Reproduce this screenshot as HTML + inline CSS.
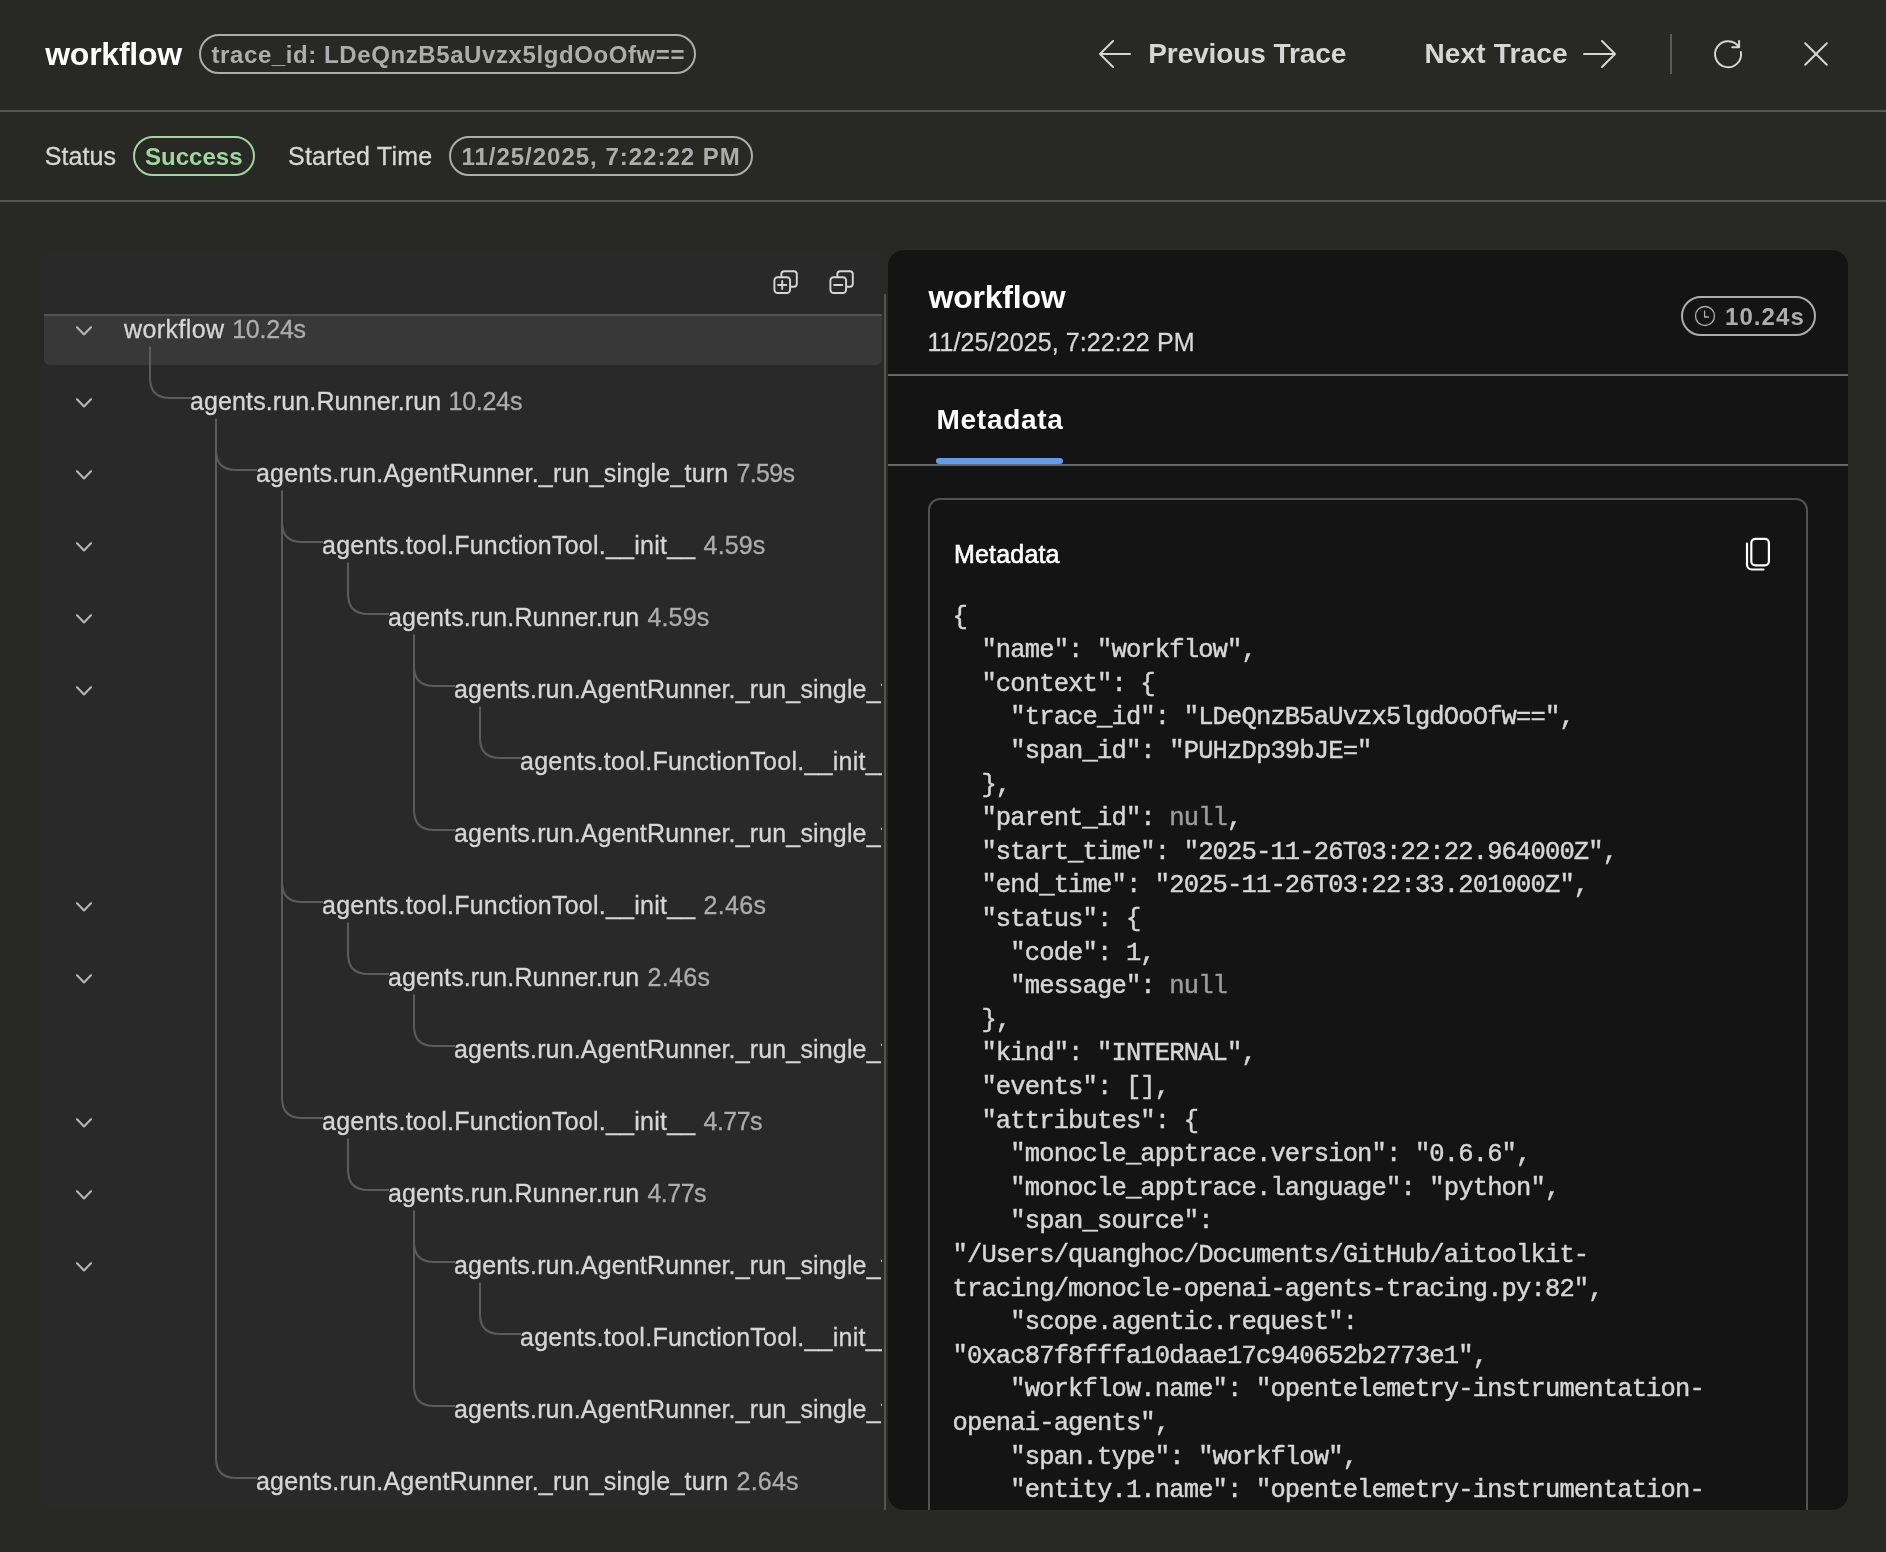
<!DOCTYPE html>
<html lang="en"><head><meta charset="utf-8"><title>workflow - trace details</title>
<style>
*{box-sizing:border-box}
html,body{margin:0;padding:0}
body{width:1886px;height:1552px;overflow:hidden;background:#282924;font-family:"Liberation Sans",sans-serif;position:relative}
#root{position:absolute;left:0;top:0;width:1886px;height:1552px;will-change:transform}
.t{position:absolute;white-space:pre;line-height:1;display:block;margin:0;font-weight:400}
.abs{position:absolute}
#hdr{position:absolute;left:0;top:0;width:1886px;height:112px;border-bottom:2px solid #555555}
#meta{position:absolute;left:0;top:112px;width:1886px;height:90px;border-bottom:2px solid #555555}
.pill{position:absolute;border:2px solid #adadad;border-radius:20px;height:40px}
.vr{position:absolute;left:1670px;top:34px;width:2px;height:40px;background:#5a5a58}
#tree{position:absolute;left:44px;top:250px;width:838px;height:1260px;background:#292929;border-radius:6px;overflow:hidden}
#tree .row{position:absolute;left:0;width:838px;height:72px}
#tree .row.sel{height:71px;background:#383838;border-radius:6px}
#tree .hd{position:absolute;left:0;top:0;width:838px;height:66px;background:#292929;border-bottom:2px solid #525252}
#tree svg.lines{position:absolute;left:0;top:0}
#sep{position:absolute;left:884px;top:294px;width:2px;height:1216px;background:#555555}
#det{position:absolute;left:888px;top:250px;width:960px;height:1260px;background:#141414;border-radius:16px;overflow:hidden}
#det .ln{position:absolute;left:0;width:960px;height:2px;background:#666}
#card{position:absolute;left:40px;top:248px;width:880px;height:1100px;border:2px solid #525252;border-radius:12px}
#tabline{position:absolute;left:48px;top:208px;width:127px;height:6px;border-radius:3px;background:#5f9eee}
pre{position:absolute;margin:0;left:22.5px;top:100.7px;-webkit-text-stroke:0.45px;font-family:"Liberation Mono",monospace;font-size:25.5px;letter-spacing:-0.853px;line-height:33.6px;color:#d6d6d6;white-space:pre}
pre i{font-style:normal;color:#9d9d9d}
</style></head>
<body>
<div id="root">
<header id="hdr">
<h1 class="t" style="left:45.2px;top:38.4px;font-size:32px;font-weight:700;letter-spacing:-0.24px;color:#ffffff">workflow</h1>
<div class="pill" style="left:199px;top:34px;width:497px;border-color:#adadad"><span class="t" style="left:10.5px;top:6.7px;font-size:24px;font-weight:700;letter-spacing:0.59px;color:#adadad">trace_id: LDeQnzB5aUvzx5lgdOoOfw==</span></div>
<div class="nav"><svg class="abs" style="left:1096px;top:36px" width="36" height="36" viewBox="0 0 36 36" fill="none" stroke="#d6d6d6" stroke-width="2" stroke-linecap="round" stroke-linejoin="round"><path d="M34 18H4M17 5L4 18l13 13"/></svg><span class="t" style="left:1148.3px;top:40.2px;font-size:28px;font-weight:700;letter-spacing:-0.10px;color:#d6d6d6">Previous Trace</span></div>
<div class="nav"><span class="t" style="left:1424.5px;top:40.2px;font-size:28px;font-weight:700;letter-spacing:0.15px;color:#d6d6d6">Next Trace</span><svg class="abs" style="left:1582px;top:36px" width="36" height="36" viewBox="0 0 36 36" fill="none" stroke="#d6d6d6" stroke-width="2" stroke-linecap="round" stroke-linejoin="round"><path d="M2 18h31M20 5l13 13-13 13"/></svg></div>
<div class="vr"></div>
<svg class="abs" style="left:1710px;top:36px" width="36" height="36" viewBox="0 0 36 36" fill="none" stroke="#d6d6d6" stroke-width="2" stroke-linecap="round" stroke-linejoin="round"><path d="M30.9 16A13 13 0 1 1 29.1 11.3M29.1 5V11.3H22.2"/></svg>
<svg class="abs" style="left:1798px;top:36px" width="36" height="36" viewBox="0 0 36 36" fill="none" stroke="#d6d6d6" stroke-width="2" stroke-linecap="round" stroke-linejoin="round"><path d="M7.2 7.2l21.6 21.6M28.8 7.2l-21.6 21.6"/></svg>
</header>
<section id="meta">
<span class="t" style="left:44.7px;top:31.6px;font-size:25px;-webkit-text-stroke:0.3px;letter-spacing:0.11px;color:#d6d6d6">Status</span>
<div class="pill" style="left:133px;top:24px;width:122px;border-color:#9fd89f"><span class="t" style="left:10.0px;top:6.5px;font-size:24px;font-weight:700;letter-spacing:0.03px;color:#9fd89f">Success</span></div>
<span class="t" style="left:288.0px;top:31.6px;font-size:25px;-webkit-text-stroke:0.3px;letter-spacing:0.22px;color:#d6d6d6">Started Time</span>
<div class="pill" style="left:449px;top:24px;width:304px;border-color:#adadad"><span class="t" style="left:10.4px;top:6.5px;font-size:24px;font-weight:700;letter-spacing:0.99px;color:#adadad">11/25/2025, 7:22:22 PM</span></div>
</section>
<main>
<nav id="tree">
<div class="row sel" style="top:44px"><span class="t" style="left:80.0px;top:22.6px;font-size:25px;-webkit-text-stroke:0.3px;letter-spacing:0.41px;color:#d6d6d6">workflow</span><span class="t" style="left:188.2px;top:22.6px;font-size:25px;-webkit-text-stroke:0.3px;letter-spacing:-0.23px;color:#adadad">10.24s</span></div>
<div class="row" style="top:116px"><span class="t" style="left:146.0px;top:22.6px;font-size:25px;-webkit-text-stroke:0.3px;letter-spacing:0.12px;color:#d6d6d6">agents.run.Runner.run</span><span class="t" style="left:404.5px;top:22.6px;font-size:25px;-webkit-text-stroke:0.3px;letter-spacing:-0.23px;color:#adadad">10.24s</span></div>
<div class="row" style="top:188px"><span class="t" style="left:212.0px;top:22.6px;font-size:25px;-webkit-text-stroke:0.3px;letter-spacing:0.21px;color:#d6d6d6">agents.run.AgentRunner._run_single_turn</span><span class="t" style="left:692.6px;top:22.6px;font-size:25px;-webkit-text-stroke:0.3px;letter-spacing:-0.69px;color:#adadad">7.59s</span></div>
<div class="row" style="top:260px"><span class="t" style="left:278.0px;top:22.6px;font-size:25px;-webkit-text-stroke:0.3px;letter-spacing:0.24px;color:#d6d6d6">agents.tool.FunctionTool.__init__</span><span class="t" style="left:659.6px;top:22.6px;font-size:25px;-webkit-text-stroke:0.3px;letter-spacing:0.13px;color:#adadad">4.59s</span></div>
<div class="row" style="top:332px"><span class="t" style="left:344.0px;top:22.6px;font-size:25px;-webkit-text-stroke:0.3px;letter-spacing:0.12px;color:#d6d6d6">agents.run.Runner.run</span><span class="t" style="left:603.5px;top:22.6px;font-size:25px;-webkit-text-stroke:0.3px;letter-spacing:0.13px;color:#adadad">4.59s</span></div>
<div class="row" style="top:404px"><span class="t" style="left:410.0px;top:22.6px;font-size:25px;-webkit-text-stroke:0.3px;letter-spacing:0.16px;color:#d6d6d6">agents.run.AgentRunner._run_single_turn</span></div>
<div class="row" style="top:476px"><span class="t" style="left:476.0px;top:22.6px;font-size:25px;-webkit-text-stroke:0.3px;letter-spacing:0.26px;color:#d6d6d6">agents.tool.FunctionTool.__init__</span></div>
<div class="row" style="top:548px"><span class="t" style="left:410.0px;top:22.6px;font-size:25px;-webkit-text-stroke:0.3px;letter-spacing:0.16px;color:#d6d6d6">agents.run.AgentRunner._run_single_turn</span></div>
<div class="row" style="top:620px"><span class="t" style="left:278.0px;top:22.6px;font-size:25px;-webkit-text-stroke:0.3px;letter-spacing:0.24px;color:#d6d6d6">agents.tool.FunctionTool.__init__</span><span class="t" style="left:659.6px;top:22.6px;font-size:25px;-webkit-text-stroke:0.3px;letter-spacing:0.33px;color:#adadad">2.46s</span></div>
<div class="row" style="top:692px"><span class="t" style="left:344.0px;top:22.6px;font-size:25px;-webkit-text-stroke:0.3px;letter-spacing:0.12px;color:#d6d6d6">agents.run.Runner.run</span><span class="t" style="left:603.5px;top:22.6px;font-size:25px;-webkit-text-stroke:0.3px;letter-spacing:0.33px;color:#adadad">2.46s</span></div>
<div class="row" style="top:764px"><span class="t" style="left:410.0px;top:22.6px;font-size:25px;-webkit-text-stroke:0.3px;letter-spacing:0.16px;color:#d6d6d6">agents.run.AgentRunner._run_single_turn</span></div>
<div class="row" style="top:836px"><span class="t" style="left:278.0px;top:22.6px;font-size:25px;-webkit-text-stroke:0.3px;letter-spacing:0.24px;color:#d6d6d6">agents.tool.FunctionTool.__init__</span><span class="t" style="left:659.6px;top:22.6px;font-size:25px;-webkit-text-stroke:0.3px;letter-spacing:-0.54px;color:#adadad">4.77s</span></div>
<div class="row" style="top:908px"><span class="t" style="left:344.0px;top:22.6px;font-size:25px;-webkit-text-stroke:0.3px;letter-spacing:0.12px;color:#d6d6d6">agents.run.Runner.run</span><span class="t" style="left:603.5px;top:22.6px;font-size:25px;-webkit-text-stroke:0.3px;letter-spacing:-0.54px;color:#adadad">4.77s</span></div>
<div class="row" style="top:980px"><span class="t" style="left:410.0px;top:22.6px;font-size:25px;-webkit-text-stroke:0.3px;letter-spacing:0.16px;color:#d6d6d6">agents.run.AgentRunner._run_single_turn</span></div>
<div class="row" style="top:1052px"><span class="t" style="left:476.0px;top:22.6px;font-size:25px;-webkit-text-stroke:0.3px;letter-spacing:0.26px;color:#d6d6d6">agents.tool.FunctionTool.__init__</span></div>
<div class="row" style="top:1124px"><span class="t" style="left:410.0px;top:22.6px;font-size:25px;-webkit-text-stroke:0.3px;letter-spacing:0.16px;color:#d6d6d6">agents.run.AgentRunner._run_single_turn</span></div>
<div class="row" style="top:1196px"><span class="t" style="left:212.0px;top:22.6px;font-size:25px;-webkit-text-stroke:0.3px;letter-spacing:0.21px;color:#d6d6d6">agents.run.AgentRunner._run_single_turn</span><span class="t" style="left:692.6px;top:22.6px;font-size:25px;-webkit-text-stroke:0.3px;letter-spacing:0.21px;color:#adadad">2.64s</span></div>
<svg class="lines" width="838" height="1260" viewBox="0 0 838 1260"><path d="M106.0 96.5V128.0Q106.0 148.0 126.0 148.0H147.0M172.0 200.0Q172.0 220.0 192.0 220.0H213.0M172.0 168.5V1208.0Q172.0 1228.0 192.0 1228.0H213.0M238.0 272.0Q238.0 292.0 258.0 292.0H279.0M238.0 632.0Q238.0 652.0 258.0 652.0H279.0M238.0 240.5V848.0Q238.0 868.0 258.0 868.0H279.0M304.0 312.5V344.0Q304.0 364.0 324.0 364.0H345.0M370.0 416.0Q370.0 436.0 390.0 436.0H411.0M370.0 384.5V560.0Q370.0 580.0 390.0 580.0H411.0M436.0 456.5V488.0Q436.0 508.0 456.0 508.0H477.0M304.0 672.5V704.0Q304.0 724.0 324.0 724.0H345.0M370.0 744.5V776.0Q370.0 796.0 390.0 796.0H411.0M304.0 888.5V920.0Q304.0 940.0 324.0 940.0H345.0M370.0 992.0Q370.0 1012.0 390.0 1012.0H411.0M370.0 960.5V1136.0Q370.0 1156.0 390.0 1156.0H411.0M436.0 1032.5V1064.0Q436.0 1084.0 456.0 1084.0H477.0" fill="none" stroke="#5c5c5c" stroke-width="2"/><path d="M33.0 77.2L40.0 84.4L47.0 77.2M33.0 149.2L40.0 156.4L47.0 149.2M33.0 221.2L40.0 228.4L47.0 221.2M33.0 293.2L40.0 300.4L47.0 293.2M33.0 365.2L40.0 372.4L47.0 365.2M33.0 437.2L40.0 444.4L47.0 437.2M33.0 653.2L40.0 660.4L47.0 653.2M33.0 725.2L40.0 732.4L47.0 725.2M33.0 869.2L40.0 876.4L47.0 869.2M33.0 941.2L40.0 948.4L47.0 941.2M33.0 1013.2L40.0 1020.4L47.0 1013.2" fill="none" stroke="#b6b6b6" stroke-width="2.1" stroke-linecap="round" stroke-linejoin="round"/></svg>
<div class="hd"><svg class="abs" style="left:728px;top:18px" width="28" height="28" viewBox="0 0 28 28" fill="none" stroke="#d6d6d6" stroke-width="1.9" stroke-linecap="round" stroke-linejoin="round"><rect x="2.4" y="9.3" width="15.7" height="15.7" rx="3.2"/><path d="M9.3 8.3V6.2a3 3 0 0 1 3-3h9.5a3 3 0 0 1 3 3v9.5a3 3 0 0 1-3 3h-2.7M10.2 12.9v8.2M6.1 17h8.2"/></svg><svg class="abs" style="left:784px;top:18px" width="28" height="28" viewBox="0 0 28 28" fill="none" stroke="#d6d6d6" stroke-width="1.9" stroke-linecap="round" stroke-linejoin="round"><rect x="2.4" y="9.3" width="15.7" height="15.7" rx="3.2"/><path d="M9.3 8.3V6.2a3 3 0 0 1 3-3h9.5a3 3 0 0 1 3 3v9.5a3 3 0 0 1-3 3h-2.7M6.1 17h8.2"/></svg></div>
</nav>
<div id="sep"></div>
<article id="det">
<h2 class="t" style="left:40.6px;top:30.6px;font-size:32px;font-weight:700;letter-spacing:-0.24px;color:#ffffff">workflow</h2>
<span class="t" style="left:39.4px;top:80.0px;font-size:25px;-webkit-text-stroke:0.3px;letter-spacing:0.10px;color:#d6d6d6">11/25/2025, 7:22:22 PM</span>
<div class="pill" style="left:793px;top:46px;width:135px;border-color:#adadad"><svg class="abs" style="left:10px;top:6px" width="24" height="24" viewBox="0 0 24 24" fill="none" stroke="#adadad" stroke-width="1.3" stroke-linecap="round" stroke-linejoin="round"><circle cx="12" cy="12" r="9.5"/><path d="M11.6 7.2v5.8h4"/></svg><span class="t" style="left:42.0px;top:7.1px;font-size:24px;font-weight:700;letter-spacing:1.08px;color:#adadad">10.24s</span></div>
<div class="ln" style="top:124px"></div>
<span class="t" style="left:48.5px;top:156.0px;font-size:28px;font-weight:700;letter-spacing:0.72px;color:#ffffff">Metadata</span>
<div id="tabline"></div>
<div class="ln" style="top:214px"></div>
<section id="card">
<span class="t" style="left:24.0px;top:41.9px;font-size:25px;-webkit-text-stroke:0.6px;letter-spacing:0.18px;color:#ffffff">Metadata</span>
<svg class="abs" style="left:812px;top:34px" width="32" height="40" viewBox="0 0 32 40" fill="none" stroke="#ffffff" stroke-width="2.2" stroke-linecap="round" stroke-linejoin="round"><rect x="9.3" y="4.8" width="17.6" height="26.5" rx="4"/><path d="M5 9.5v21a5 5 0 0 0 5 5h11.5"/></svg>
<pre>{
  "name": "workflow",
  "context": {
    "trace_id": "LDeQnzB5aUvzx5lgdOoOfw==",
    "span_id": "PUHzDp39bJE="
  },
  "parent_id": <i>null</i>,
  "start_time": "2025-11-26T03:22:22.964000Z",
  "end_time": "2025-11-26T03:22:33.201000Z",
  "status": {
    "code": 1,
    "message": <i>null</i>
  },
  "kind": "INTERNAL",
  "events": [],
  "attributes": {
    "monocle_apptrace.version": "0.6.6",
    "monocle_apptrace.language": "python",
    "span_source":
"/Users/quanghoc/Documents/GitHub/aitoolkit-
tracing/monocle-openai-agents-tracing.py:82",
    "scope.agentic.request":
"0xac87f8fffa10daae17c940652b2773e1",
    "workflow.name": "opentelemetry-instrumentation-
openai-agents",
    "span.type": "workflow",
    "entity.1.name": "opentelemetry-instrumentation-
openai-agents",</pre>
</section>
</article>
</main>
</div>
</body></html>
